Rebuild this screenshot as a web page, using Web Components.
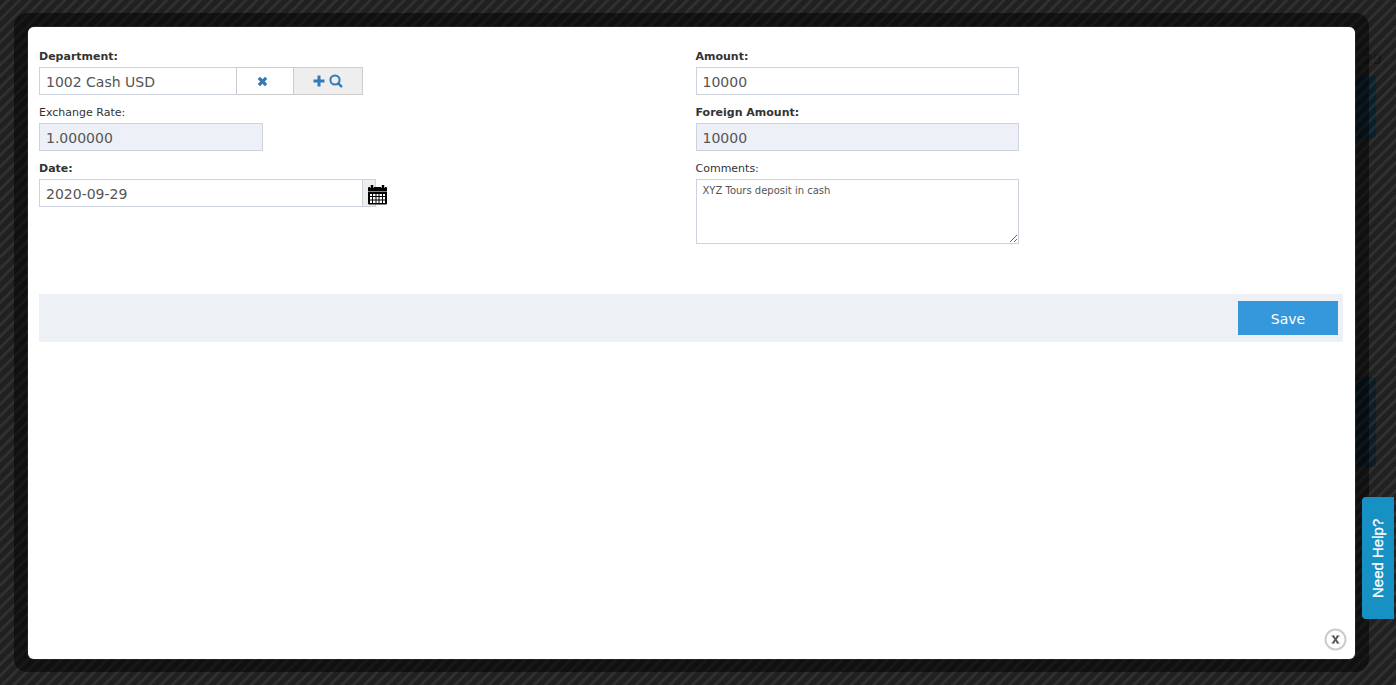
<!DOCTYPE html>
<html lang="en">
<head>
<meta charset="utf-8">
<title>Deposit</title>
<style>
  html, body { height: 100%; margin: 0; }
  body { overflow: hidden; font-family: "DejaVu Sans", Verdana, sans-serif; color: #333; background: #202020; }
</style>
</head>
<body>
<deposit-page></deposit-page>
<script>
const define = (name, html, setup) => customElements.define(name, class extends HTMLElement {
  constructor() {
    super();
    this.attachShadow({ mode: "open" }).innerHTML = html;
  }
  connectedCallback() { if (setup) setup(this, this.shadowRoot); }
});

const control = `
  input, textarea { box-sizing: border-box; display: block; margin: 0; width: 100%; border: 1px solid #cdd3de; border-radius: 0;
    background: #fff; color: #555; font-family: inherit; outline: none; }
  input { height: 28px; padding: 1px 6px 0; font-size: 14px; line-height: 20px; }
  input[readonly] { background: #edf0f6; }
  textarea { height: 65px; padding: 4px 6px; font-size: 10px; line-height: 14px; resize: both; }
`;

define("form-field", `
  <style>
    :host { display: block; }
    label { display: block; font-size: 11px; line-height: 20px; }
    :host([required]) label { font-weight: bold; }
    .row { display: flex; width: 50%; }
    :host([short]) .row { width: 224px; }
    .row > input, .row > textarea { flex: 1; min-width: 0; }
    ${control}
  </style>
  <label for="c"></label>
  <div class="row"></div>`,
  (el, root) => {
    root.querySelector("label").textContent = el.getAttribute("label");
    const c = document.createElement(el.hasAttribute("multiline") ? "textarea" : "input");
    c.id = "c";
    c.value = el.getAttribute("value");
    c.readOnly = el.hasAttribute("readonly");
    root.querySelector(".row").replaceChildren(c, document.createElement("slot"));
  });

define("lookup-actions", `
  <style>
    :host { display: flex; flex: none; color: #337ab7; }
    button { box-sizing: border-box; height: 28px; padding: 0; border: 1px solid #ccc; background: #fff; color: inherit;
      display: flex; align-items: center; justify-content: center; gap: 4px; margin-left: -1px; }
    .clear { width: 58px; padding-right: 5px; }
    .find { width: 70px; background: #eee; }
    svg { display: block; fill: currentColor; }
  </style>
  <button class="clear" aria-label="Clear department">
    <svg width="11" height="11" viewBox="0 0 11 11"><path d="M3 .7 5.5 3.2 8 .7 10.3 3 7.8 5.5 10.3 8 8 10.3 5.5 7.8 3 10.3.7 8 3.2 5.5.7 3Z"/></svg>
  </button>
  <button class="find" aria-label="Find department">
    <svg width="12" height="12" viewBox="0 0 12 12"><path d="M4.500.5h3v4h4v3h-4v4h-3v-4h-4v-3h4Z"/></svg>
    <svg width="14" height="14" viewBox="0 0 14 14"><circle cx="6" cy="6" r="4.600" fill="none" stroke="currentColor" stroke-width="2"/><path d="m9.300 9.300 3 3" stroke="currentColor" stroke-width="2.400" stroke-linecap="round"/></svg>
  </button>`);

define("date-picker-button", `
  <style>
    :host { display: block; flex: none; width: 14px; margin-left: -1px; margin-right: -13px; }
    button { box-sizing: border-box; width: 14px; height: 28px; padding: 3px 0 0 5px; border: 1px solid #cdd3de; background: #eee; display: flex; align-items: center; }
    svg { flex: none; display: block; }
  </style>
  <button aria-label="Choose date">
    <svg width="19" height="20" viewBox="0 0 19 20">
      <rect y="2" width="19" height="17.500" rx="1"/>
      <path d="M0 6.500h19" stroke="#888" stroke-width="1"/>
      <path d="M2 2.500h1M5 2.500h1M13 2.500h1M16 2.500h1" stroke="#ccc" stroke-width="1"/>
      <path d="M4 .500v3M15 .500v3" stroke="#000" stroke-width="2.500" stroke-linecap="round"/>
      <path fill="#fff" d="M2 9h2v2H2zM5 9h2.500v2H5zM8.500 9h2v2h-2zM11.500 9h2.500v2h-2.500zM15 9h2v2h-2zM2 12h2v2.500H2zM5 12h2.500v2.500H5zM8.500 12h2v2.500h-2zM11.500 12h2.500v2.500h-2.500zM15 12h2v2.500h-2zM2 15.500h2V18H2zM5 15.500h2.500V18H5zM8.500 15.500h2V18h-2zM11.500 15.500h2.500V18h-2.500zM15 15.500h2V18h-2z"/>
    </svg>
  </button>`);

define("form-footer", `
  <style>
    :host { display: flex; justify-content: flex-end; padding: 7px 5px; background: #edf1f6; }
    button { width: 100px; height: 34px; border: 0; padding: 1px 0 0; background: #3598dc; color: #fff; font-family: inherit; font-size: 14px; }
  </style>
  <button><slot></slot></button>`);

define("modal-dialog", `
  <style>
    :host { display: block; box-sizing: border-box; position: relative; background: #fff; border-radius: 6px; padding: 20px 12px 20px 11px; box-shadow: 0 0 1px #aaa; }
    .close { position: absolute; right: 8px; bottom: 8px; width: 23px; height: 23px; padding: 0; border: 0; background: none; }
    svg { display: block; }
  </style>
  <slot></slot>
  <button class="close" aria-label="Close">
    <svg width="23" height="23" viewBox="0 0 23 23"><circle cx="11.500" cy="11.500" r="10" fill="#fff" stroke="#ccc" stroke-width="2"/><path d="m9 8 5 7m0-7-5 7" stroke="#555" stroke-width="2"/><path d="M7.500 8h3M12.500 8h3M7.500 15h3M12.500 15h3" stroke="#555" stroke-width="1"/></svg>
  </button>`);

define("help-tab", `
  <style>
    :host { display: block; }
    button { display: block; width: 32px; height: 122px; padding: 0; border: 0; border-radius: 0 4px 4px 0; background: #1790c4; color: #fff;
      font: 15px/32px "Liberation Sans", Arial, sans-serif; -webkit-text-stroke: 0.3px #fff; writing-mode: vertical-rl; transform: rotate(180deg); }
  </style>
  <button><slot></slot></button>`);

define("page-behind", `
  <style>
    :host { display: block; font-size: 14px; color: #141414; }
    div { position: absolute; box-sizing: border-box; right: 20px; width: 40px; }
    .n { top: 51px; right: 12px; width: 20px; }
    .a { top: 76px; height: 62px; background: #0b1f2a; }
    .line { top: 138px; height: 494px; border: solid #15222a; border-width: 0 1px 1px 0; }
    .b { top: 377px; height: 90px; background: #0d1b24; }
  </style>
  <div class="n">29</div><div class="line"></div><div class="a"></div><div class="b"></div>`);

define("deposit-page", `
  <style>
    :host { display: block; box-sizing: border-box; height: 100%; padding: 13px 27px 13px 14px; position: relative; }
    .stripes { position: absolute; inset: 0; background: repeating-linear-gradient(135deg, rgba(255,255,255,0) 0 4px, rgba(255,255,255,.07) 5px 7px, rgba(255,255,255,0) 8px); }
    .frame { position: relative; box-sizing: border-box; height: 100%; padding: 14px 14px 13px; border-radius: 13px; background: rgba(0,0,0,.5); }
    modal-dialog { height: 100%; }
    .cols { display: grid; grid-template-columns: 1fr 1fr; gap: 9px; min-height: 247px; }
    .col { display: flex; flex-direction: column; gap: 8px; }
    help-tab { position: absolute; right: 2px; bottom: 66px; }
  </style>
  <page-behind></page-behind>
  <div class="stripes"></div>
  <div class="frame">
    <modal-dialog>
      <div class="cols">
        <div class="col">
          <form-field label="Department:" value="1002 Cash USD" required><lookup-actions></lookup-actions></form-field>
          <form-field label="Exchange Rate:" value="1.000000" readonly short></form-field>
          <form-field label="Date:" value="2020-09-29" required><date-picker-button></date-picker-button></form-field>
        </div>
        <div class="col">
          <form-field label="Amount:" value="10000" required></form-field>
          <form-field label="Foreign Amount:" value="10000" readonly required></form-field>
          <form-field label="Comments:" value="XYZ Tours deposit in cash" multiline></form-field>
        </div>
      </div>
      <form-footer>Save</form-footer>
    </modal-dialog>
  </div>
  <help-tab>Need Help?</help-tab>`);
</script>
</body>
</html>
